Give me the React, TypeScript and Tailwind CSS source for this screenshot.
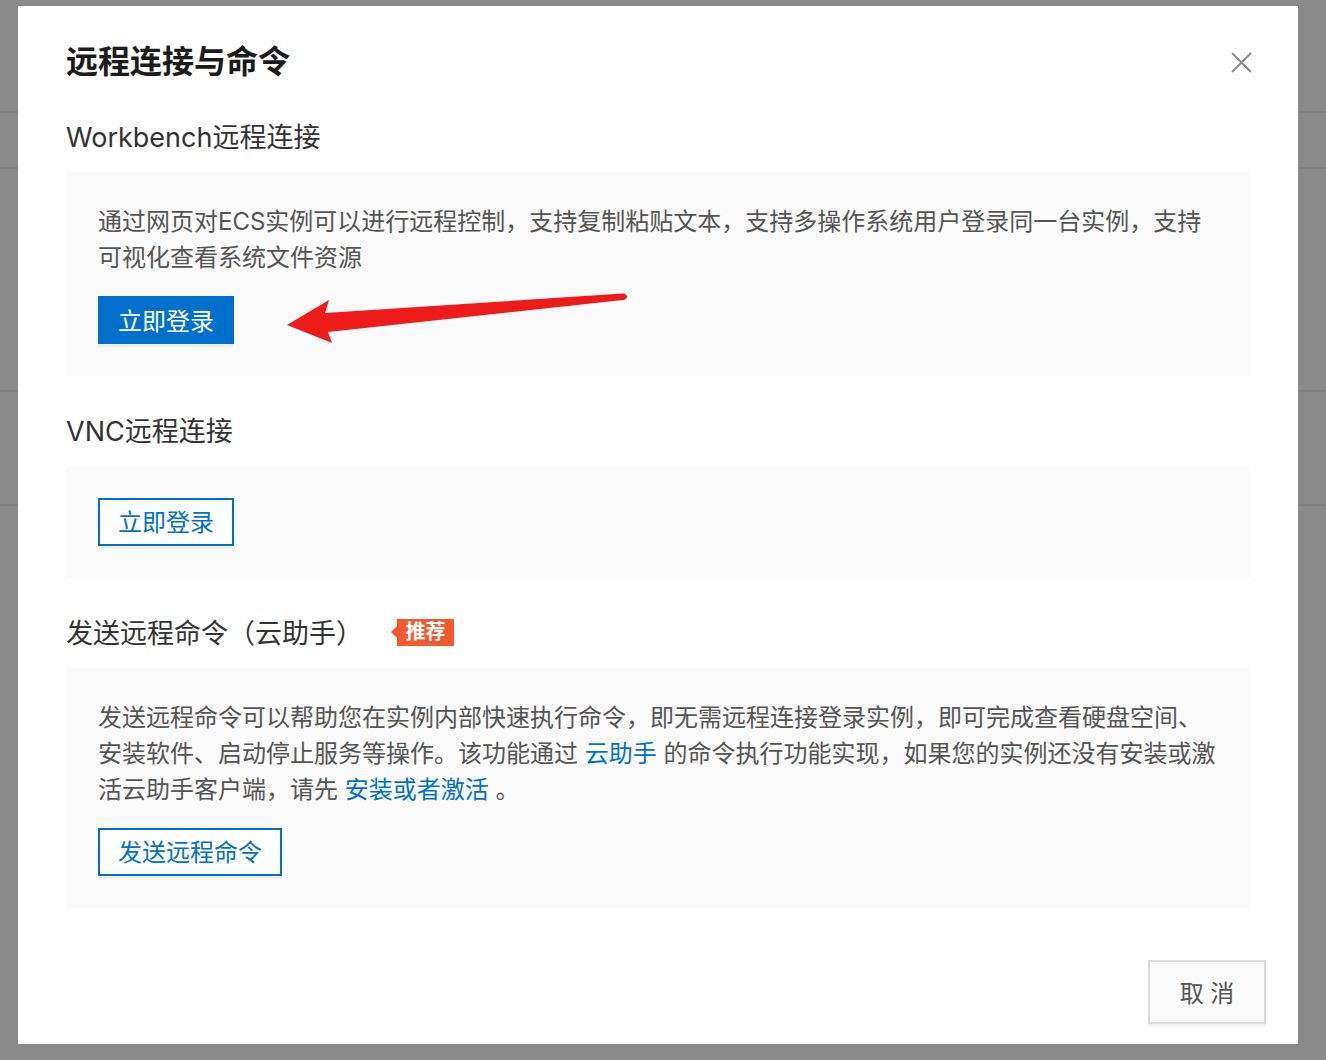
import React from 'react';

const font = { fontFamily: 'Inter, "Noto Sans CJK SC", sans-serif' };

function OutlineButton({ label }: { label: string }) {
  return (
    <button className="h-[48px] border-2 border-[#0070cc] bg-white px-[18px] pt-[2px] text-[24px] leading-[42px] text-[#0070cc] shadow-[0_3px_0_0_#efefef]">
      {label}
    </button>
  );
}

function SectionTitle({ children, first }: { children: React.ReactNode; first?: boolean }) {
  return (
    <div
      className={`flex h-[36px] items-center text-[27px] leading-[36px] text-[#333] ${
        first ? 'mt-[36px]' : 'mt-[36px]'
      }`}
    >
      {children}
    </div>
  );
}

function Panel({ children }: { children: React.ReactNode }) {
  return <div className="mt-[18px] bg-[#fafafa] p-[32px]">{children}</div>;
}

function Arrow() {
  return (
    <svg
      className="pointer-events-none absolute left-0 top-0"
      width="1280"
      height="1038"
      viewBox="0 0 1280 1038"
    >
      <path
        d="M269 319 L311 294 L307 307 L605 287.5 Q609.5 288.5 609 291 Q608.5 293.5 605 294 L310 326 L314 337 Z"
        fill="#ee1b1b"
      />
    </svg>
  );
}

export default function App() {
  return (
    <div className="relative h-[1060px] w-full overflow-hidden bg-[#898989]" style={font}>
      {/* page underneath the mask */}
      <div className="flex flex-col">
        <div className="h-[113px] border-b-2 border-[#7e7e7e]" />
        <div className="h-[56px] border-b-2 border-[#7e7e7e]" />
        <div className="h-[223px] border-b-2 border-[#7e7e7e]" />
        <div className="h-[114px] border-b-2 border-[#7e7e7e]" />
      </div>

      <div className="absolute left-[18px] top-[6px] flex h-[1038px] w-[1280px] flex-col bg-white">
        <div className="px-[48px] pt-[36px]">
          <h1 className="h-[40px] text-[32px] font-bold leading-[40px] text-[#1b1b1b]">远程连接与命令</h1>
        </div>
        <button className="absolute right-[46px] top-[46px]">
          <svg width="21" height="21" viewBox="0 0 21 21">
            <path d="M1 1 L20 20 M20 1 L1 20" stroke="#8a8a8a" strokeWidth="2" fill="none" />
          </svg>
        </button>

        <div className="px-[48px]">
          <SectionTitle first>
            <span className="pt-[4px]">Workbench远程连接</span>
          </SectionTitle>
          <Panel>
            <p className="text-[24px] leading-[36px] text-[#555]">
              通过网页对ECS实例可以进行远程控制，支持复制粘贴文本，支持多操作系统用户登录同一台实例，支持
              <br />
              可视化查看系统文件资源
            </p>
            <button className="mt-[20px] h-[48px] bg-[#0070cc] px-[20px] pt-[3px] text-[24px] leading-[45px] text-white shadow-[0_3px_0_0_#efefef]">
              立即登录
            </button>
          </Panel>

          <SectionTitle>
            <span className="pt-[4px]">VNC远程连接</span>
          </SectionTitle>
          <Panel>
            <OutlineButton label="立即登录" />
          </Panel>

          <SectionTitle>
            <span className="pt-[4px]">发送远程命令（云助手）</span>
            <span className="relative ml-[34px] flex h-[27px] w-[57px] items-center justify-center bg-[#f25a2d] text-[20px] font-bold text-white">
              <span className="absolute -left-[6px] top-1/2 -translate-y-1/2 border-y-[6px] border-r-[6px] border-y-transparent border-r-[#f25a2d]" />
              推荐
            </span>
          </SectionTitle>
          <Panel>
            <p className="text-[24px] leading-[36px] text-[#555]">
              发送远程命令可以帮助您在实例内部快速执行命令，即无需远程连接登录实例，即可完成查看硬盘空间、
              <br />
              安装软件、启动停止服务等操作。该功能通过 <a className="text-[#0070cc]">云助手</a> 的命令执行功能实现，如果您的实例还没有安装或激
              <br />
              活云助手客户端，请先 <a className="text-[#0070cc]">安装或者激活</a> 。
            </p>
            <div className="mt-[20px]">
              <OutlineButton label="发送远程命令" />
            </div>
          </Panel>
        </div>

        <div className="mt-auto flex justify-end pb-[20px] pr-[32px]">
          <button className="h-[64px] w-[118px] border-2 border-[#dcdcdc] bg-[#fafafa] pt-[3px] text-[24px] text-[#555] shadow-[0_3px_0_0_#f2f2f2]">
            取 消
          </button>
        </div>

        <Arrow />
      </div>
    </div>
  );
}
